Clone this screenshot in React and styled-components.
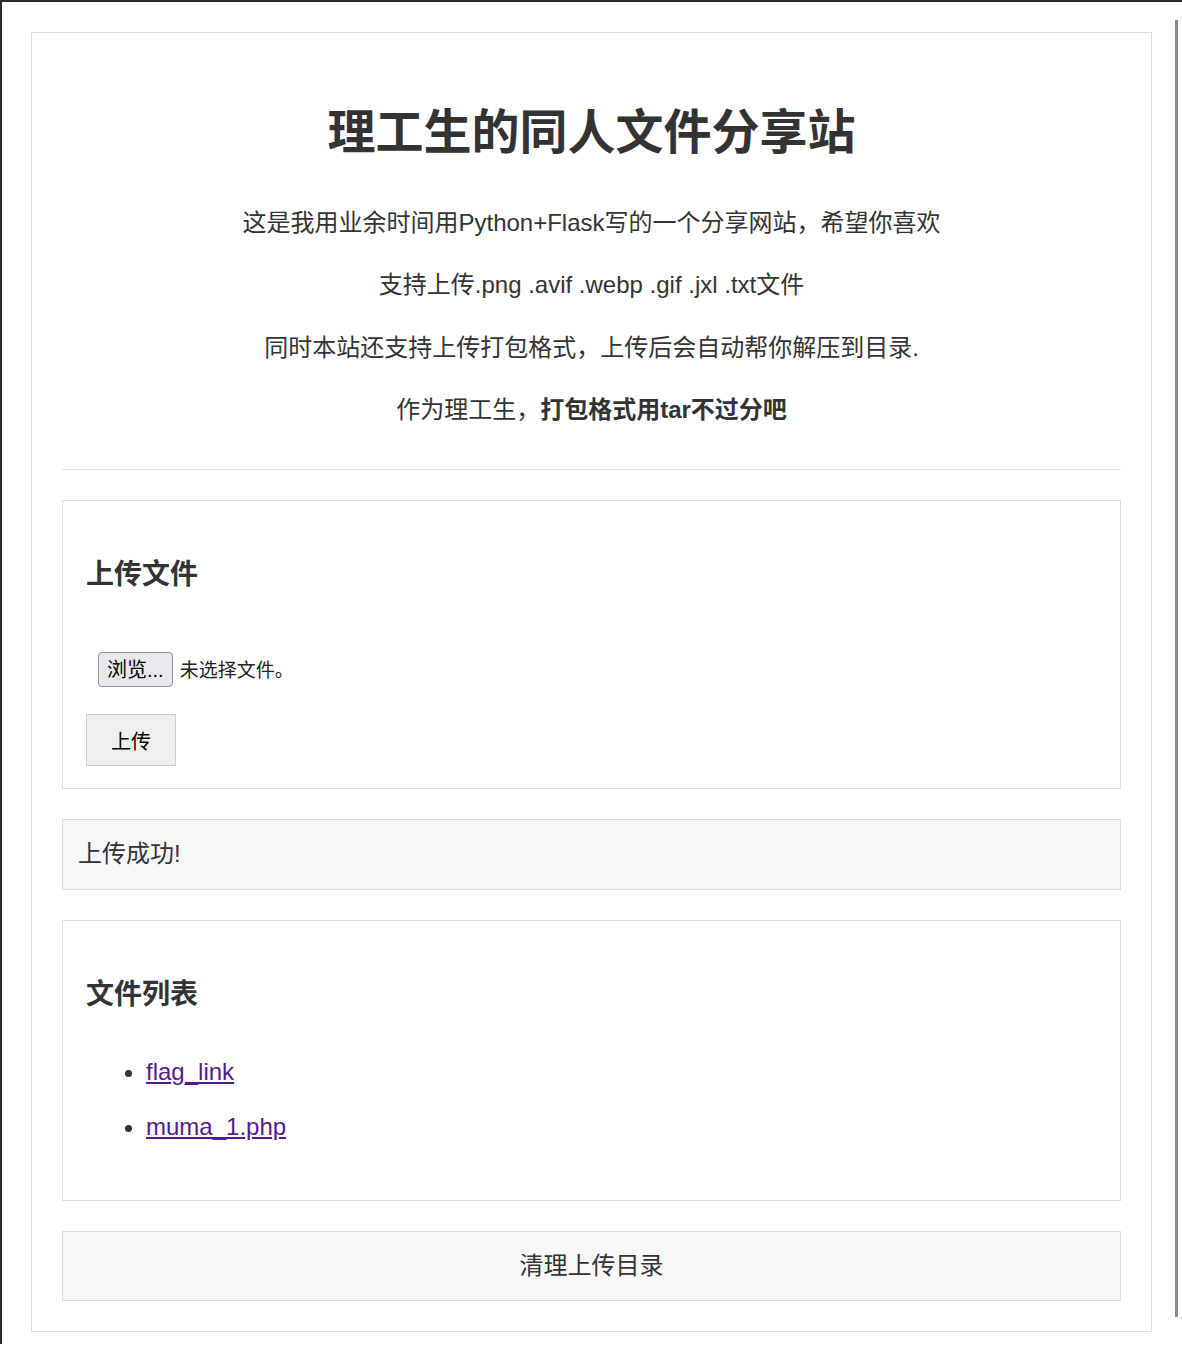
import React from "react";
import styled, { createGlobalStyle } from "styled-components";

const Global = createGlobalStyle`
  html {
    border-top: 2px solid #2b2a33;
    border-left: 2px solid #2b2a33;
    scrollbar-width: none;
    background: #fff;
  }
  html::-webkit-scrollbar, body::-webkit-scrollbar { display: none; }
  body {
    margin: 0;
    font-family: "Liberation Sans", "Noto Sans CJK SC", sans-serif;
    color: #333;
    line-height: 1.6;
    background: #fff;
  }
`;

const Container = styled.div`
  width: 1059px;
  margin: 30px 0 12px 29px;
  padding: 30px;
  border: 1px solid #ddd;
  background: #fff;
`;

const Header = styled.header`
  text-align: center;
  border-bottom: 1px solid #ddd;
  padding-bottom: 16px;
  margin-bottom: 30px;
`;

const Title = styled.h1`
  font-size: 48px;
  font-weight: 700;
  line-height: 1.6;
  margin: 32px 0;
  color: #333;
`;

const Para = styled.p`
  font-size: 24px;
  line-height: 1.6;
  margin: 24px 0;
`;

const Panel = styled.section`
  border: 1px solid #ddd;
  background: ${(p) => (p.$muted ? "#f8f8f8" : "#fff")};
  padding: ${(p) => p.$pad || "23px 23px 22px"};
  margin-bottom: 30px;
  font-size: 24px;
  text-align: ${(p) => (p.$center ? "center" : "left")};
  &:last-child { margin-bottom: 0; }
`;

const PanelTitle = styled.h2`
  font-size: 28px;
  font-weight: 700;
  line-height: 44.8px;
  margin: 29px 0 0;
  color: #333;
`;

const FileRow = styled.div`
  display: flex;
  align-items: center;
  gap: 7px;
  padding: 12px;
  margin-top: 42px;
  font-size: 19px;
  color: #222;
`;

const BrowseButton = styled.label`
  display: inline-flex;
  align-items: center;
  height: 35px;
  box-sizing: border-box;
  padding: 0 8px;
  border: 1px solid #8f8f9d;
  border-radius: 4px;
  background: #e9e9ed;
  color: #000;
  font-size: 20px;
  cursor: pointer;
  input { display: none; }
`;

const FileName = styled.span`
  padding-top: 3px;
`;

const SubmitButton = styled.button`
  display: block;
  margin-top: 15px;
  height: 52px;
  padding: 0 24px;
  border: 1px solid #ccc;
  background: #efefef;
  color: #000;
  font-family: inherit;
  font-size: 20px;
  cursor: pointer;
`;

const Message = styled.div`
  line-height: 38.4px;
`;

const FileList = styled.ul`
  margin: 36px 0 31px;
  padding-left: 60px;
`;

const FileItem = styled.li`
  line-height: 38.4px;
  margin-bottom: 16.6px;
  &:last-child { margin-bottom: 0; }
  &::marker { color: #333; }
`;

const FileLink = styled.a`
  color: #551a8b;
  text-decoration: underline;
`;

const ClearButton = styled.div`
  line-height: 38.4px;
  cursor: pointer;
`;

const Scrollbar = styled.div`
  position: fixed;
  top: 20px;
  right: 4px;
  width: 3px;
  height: 1297px;
  background: #8a8a8a;
`;

export default function App() {
  return (
    <>
      <Global />
      <Container>
        <Header>
          <Title>理工生的同人文件分享站</Title>
          <Para>这是我用业余时间用Python+Flask写的一个分享网站，希望你喜欢</Para>
          <Para>支持上传.png .avif .webp .gif .jxl .txt文件</Para>
          <Para>同时本站还支持上传打包格式，上传后会自动帮你解压到目录.</Para>
          <Para>
            作为理工生，<strong>打包格式用tar不过分吧</strong>
          </Para>
        </Header>

        <Panel>
          <PanelTitle>上传文件</PanelTitle>
          <FileRow>
            <BrowseButton>
              浏览...
              <input type="file" />
            </BrowseButton>
            <FileName>未选择文件。</FileName>
          </FileRow>
          <SubmitButton type="button">上传</SubmitButton>
        </Panel>

        <Panel $muted $pad="15px">
          <Message>上传成功!</Message>
        </Panel>

        <Panel>
          <PanelTitle>文件列表</PanelTitle>
          <FileList>
            <FileItem>
              <FileLink href="#">flag_link</FileLink>
            </FileItem>
            <FileItem>
              <FileLink href="#">muma_1.php</FileLink>
            </FileItem>
          </FileList>
        </Panel>

        <Panel $muted $center $pad="15px">
          <ClearButton>清理上传目录</ClearButton>
        </Panel>
      </Container>
      <Scrollbar />
    </>
  );
}
